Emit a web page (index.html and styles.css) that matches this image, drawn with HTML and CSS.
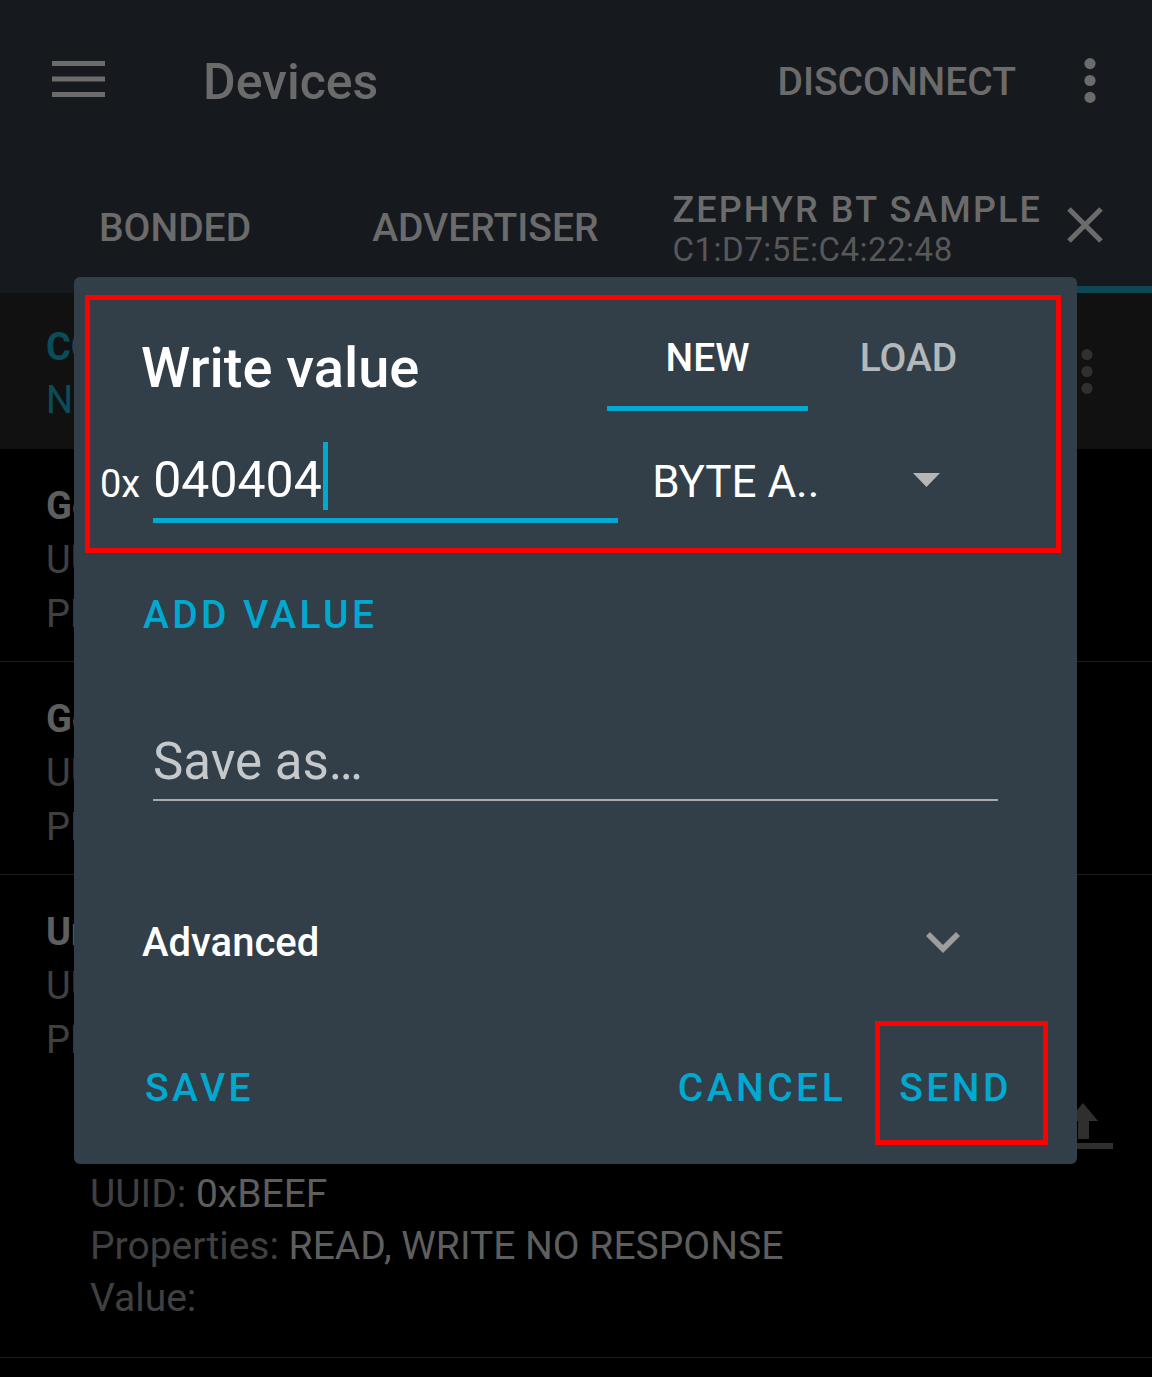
FILE: index.html
```html
<!DOCTYPE html>
<html lang="en">
<head>
<meta charset="utf-8">
<title>Devices</title>
<link rel="stylesheet" href="styles.css">
</head>
<body>
<div class="screen">
  <header class="appbar">
    <svg class="hamburger" width="53" height="36" viewBox="0 0 53 36"><rect x="0" y="0" width="53" height="5"/><rect x="0" y="15.5" width="53" height="5"/><rect x="0" y="31" width="53" height="5"/></svg>
    <div class="appbar-title">Devices</div>
    <div class="appbar-action">DISCONNECT</div>
    <svg class="overflow" width="12" height="45" viewBox="0 0 12 45"><circle cx="6" cy="5.6" r="5.6"/><circle cx="6" cy="22.5" r="5.6"/><circle cx="6" cy="39.4" r="5.6"/></svg>
  </header>
  <nav class="tabs">
    <div class="tab tab-bonded">BONDED</div>
    <div class="tab tab-adv">ADVERTISER</div>
    <div class="tab tab-device">
      <div class="device-text">
        <div class="device-name">ZEPHYR BT SAMPLE</div>
        <div class="device-addr">C1:D7:5E:C4:22:48</div>
      </div>
      <svg class="close" width="38" height="36" viewBox="0 0 38 36"><path d="M3 2 L35 34 M35 2 L3 34"/></svg>
    </div>
  </nav>
  <section class="status">
    <div class="status-text">
      <div class="status-state">CONNECTED</div>
      <div class="status-bond">NOT BONDED</div>
    </div>
    <svg class="status-menu" width="12" height="45" viewBox="0 0 12 45"><circle cx="6" cy="5.6" r="5.6"/><circle cx="6" cy="22.5" r="5.6"/><circle cx="6" cy="39.4" r="5.6"/></svg>
  </section>
  <ul class="services">
    <li class="service">
      <div class="svc-title">Generic Attribute</div>
      <div class="svc-line">UUID: 0x1801</div>
      <div class="svc-line">PRIMARY SERVICE</div>
    </li>
    <li class="service">
      <div class="svc-title">Generic Access</div>
      <div class="svc-line">UUID: 0x1800</div>
      <div class="svc-line">PRIMARY SERVICE</div>
    </li>
    <li class="service open">
      <div class="svc-title">Unknown Service</div>
      <div class="svc-line">UUID: 12345678-1234-5678-1234-56789abcdef0</div>
      <div class="svc-line">PRIMARY SERVICE</div>
    </li>
    <li class="char">
      <div class="char-text">
        <div class="char-title">Unknown Characteristic</div>
        <div class="char-line"><span class="lbl">UUID: </span><span class="val">0xBEEF</span></div>
        <div class="char-line"><span class="lbl">Properties: </span><span class="val">READ, WRITE NO RESPONSE</span></div>
        <div class="char-line"><span class="lbl">Value:</span></div>
      </div>
      <svg class="upload" width="60" height="46" viewBox="0 0 60 46"><path d="M30 0 L45 18 L36 18 L36 36 L25 36 L25 18 L15 18 Z"/><rect x="0" y="40" width="60" height="6"/></svg>
    </li>
  </ul>
</div>

<div class="dialog">
  <div class="dlg-head">
    <h2 class="dlg-title">Write value</h2>
    <div class="dlg-tabs">
      <div class="dlg-tab active">NEW</div>
      <div class="dlg-tab">LOAD</div>
    </div>
  </div>
  <div class="value-row">
    <span class="prefix">0x</span>
    <div class="hex-field"><span class="hex-text">040404</span><span class="caret"></span></div>
    <div class="type-select"><span class="type-text">BYTE A..</span><svg class="select-arrow" width="27" height="14" viewBox="0 0 27 14"><path d="M0 0 L27 0 L13.5 14 Z"/></svg></div>
  </div>
  <div class="add-value">ADD VALUE</div>
  <div class="save-as">Save as…</div>
  <div class="advanced">
    <span>Advanced</span>
    <svg class="chevron" width="34" height="21" viewBox="6 8.59 12 7.41"><path d="M16.59 8.59L12 13.17 7.41 8.59 6 10l6 6 6-6z"/></svg>
  </div>
  <div class="actions">
    <span class="btn">SAVE</span>
    <span class="actions-gap"></span>
    <span class="btn">CANCEL</span>
    <span class="btn btn-send">SEND</span>
  </div>
  <div class="mark mark-value"></div>
  <div class="mark mark-send"></div>
</div>
</body>
</html>
```

FILE: styles.css
```css
* { box-sizing: border-box; margin: 0; padding: 0; }
html, body { background: #000; }
body {
  width: 1152px;
  height: 1377px;
  overflow: hidden;
  position: relative;
  font-family: Roboto, "Noto Sans", sans-serif;
}

/* ---------- background screen ---------- */
.appbar {
  height: 164px;
  background: #161a1e;
  display: flex;
  align-items: center;
  padding: 0 56px 0 52px;
  color: #6b6b6b;
}
.hamburger { fill: #6b6b6b; flex: none; margin-bottom: 6px; }
.appbar-title {
  margin-left: 98px;
  flex: 1;
  font-size: 50px;
  font-weight: 500;
  line-height: 50px;
}
.appbar-action { font-size: 39px; font-weight: 500; line-height: 39px; }
.overflow { fill: #6b6b6b; flex: none; margin-left: 68px; margin-bottom: 3px; }

.tabs {
  height: 129px;
  background: #161a1e;
  display: flex;
  color: #6b6b6b;
}
.tab {
  display: flex;
  align-items: center;
  font-size: 39px;
  font-weight: 500;
  line-height: 39px;
}
.tab-bonded { padding-left: 99px; }
.tab-adv { margin-left: 121px; }
.tab-device {
  margin-left: 74px;
  flex: 1;
  border-bottom: 7px solid #0b4853;
}
.device-text { flex: 1; margin-top: 9px; }
.device-name { font-size: 36px; line-height: 39px; letter-spacing: 2.1px; white-space: nowrap; }
.device-addr { font-size: 33px; line-height: 39px; font-weight: 400; letter-spacing: 0.5px; color: #585858; }
.close { stroke: #6b6b6b; stroke-width: 5; fill: none; margin: 0 48px 0 20px; flex: none; }

.status {
  height: 156px;
  background: #111;
  display: flex;
  align-items: center;
  padding: 0 59px 0 46px;
}
.status-text { flex: 1; margin-top: 5px; color: #0a4d59; font-size: 38px; line-height: 53px; }
.status-state { font-weight: 700; }
.status-menu { fill: #303030; flex: none; }

.services { list-style: none; }
.service {
  padding: 30px 0 20px 46px;
  border-bottom: 1px solid #1c1c1c;
  font-size: 38px;
  line-height: 54px;
  white-space: nowrap;
}
.service.open { border-bottom: none; padding-bottom: 29px; }
.svc-title { font-weight: 700; color: #5e5e5e; }
.svc-line { color: #404040; }

.char {
  display: flex;
  padding: 20px 39px 33px 90px;
  border-bottom: 1px solid #1c1c1c;
  font-size: 39px;
  line-height: 52px;
}
.char-text { flex: 1; }
.char-title { font-weight: 700; color: #5e5e5e; }
.lbl { color: #404040; }
.val { color: #5e5e5e; }
.upload { fill: #2f2f2f; flex: none; align-self: flex-start; margin-top: -13px; }

/* ---------- dialog ---------- */
.dialog {
  position: absolute;
  left: 74px;
  top: 277px;
  width: 1003px;
  background: #323e48;
  border-radius: 6px;
  color: #fff;
  padding-bottom: 56px;
}
.dlg-head {
  display: flex;
  justify-content: space-between;
  align-items: flex-start;
  padding: 0 68px 0 67px;
}
.dlg-title {
  margin-top: 63px;
  font-size: 56px;
  line-height: 56px;
  font-weight: 500;
}
.dlg-tabs { display: flex; margin-top: 34px; }
.dlg-tab {
  width: 201px;
  height: 100px;
  display: flex;
  align-items: center;
  justify-content: center;
  border-bottom: 5px solid transparent;
  font-size: 39px;
  line-height: 39px;
  font-weight: 500;
  color: #b4b8bb;
}
.dlg-tab.active { color: #fff; border-bottom-color: #01a8d0; }

.value-row {
  display: flex;
  align-items: baseline;
  padding: 39px 0 0 26px;
}
.prefix { font-size: 38px; }
.hex-field {
  margin-left: 13px;
  width: 465px;
  font-size: 50px;
  line-height: 60px;
  padding-bottom: 8px;
  border-bottom: 5px solid #01a8d0;
}
.caret {
  display: inline-block;
  width: 5px;
  height: 68px;
  margin-top: -12px;
  margin-left: 1px;
  vertical-align: -13px;
  background: #01a8d0;
}
.type-select { margin-left: 34px; font-size: 44px; }
.select-arrow { fill: #b6b6b6; margin-left: 94px; vertical-align: 10px; }

.add-value {
  margin: 73px 0 0 69px;
  font-size: 39px;
  line-height: 39px;
  font-weight: 500;
  letter-spacing: 3.4px;
  color: #01a8d0;
}
.save-as {
  margin: 97px 79px 0;
  font-size: 51px;
  line-height: 60px;
  padding-bottom: 7px;
  border-bottom: 2px solid #a9acae;
  color: #c6c9cc;
}
.advanced {
  margin-top: 121px;
  padding: 0 117px 0 68px;
  display: flex;
  justify-content: space-between;
  align-items: center;
  font-size: 40px;
  line-height: 41px;
  font-weight: 500;
}
.chevron { fill: #9d9d9d; }
.actions {
  margin-top: 106px;
  padding: 0 65px 0 71px;
  display: flex;
  font-size: 39px;
  line-height: 39px;
  font-weight: 500;
  letter-spacing: 3.5px;
  color: #01a8d0;
}
.actions-gap { flex: 1; }
.btn-send { margin-left: 53px; }

.mark { position: absolute; border: 5px solid #ff0000; }
.mark-value { left: 11px; top: 18px; width: 976px; height: 258px; }
.mark-send { left: 801px; top: 744px; width: 173px; height: 124px; }
```
